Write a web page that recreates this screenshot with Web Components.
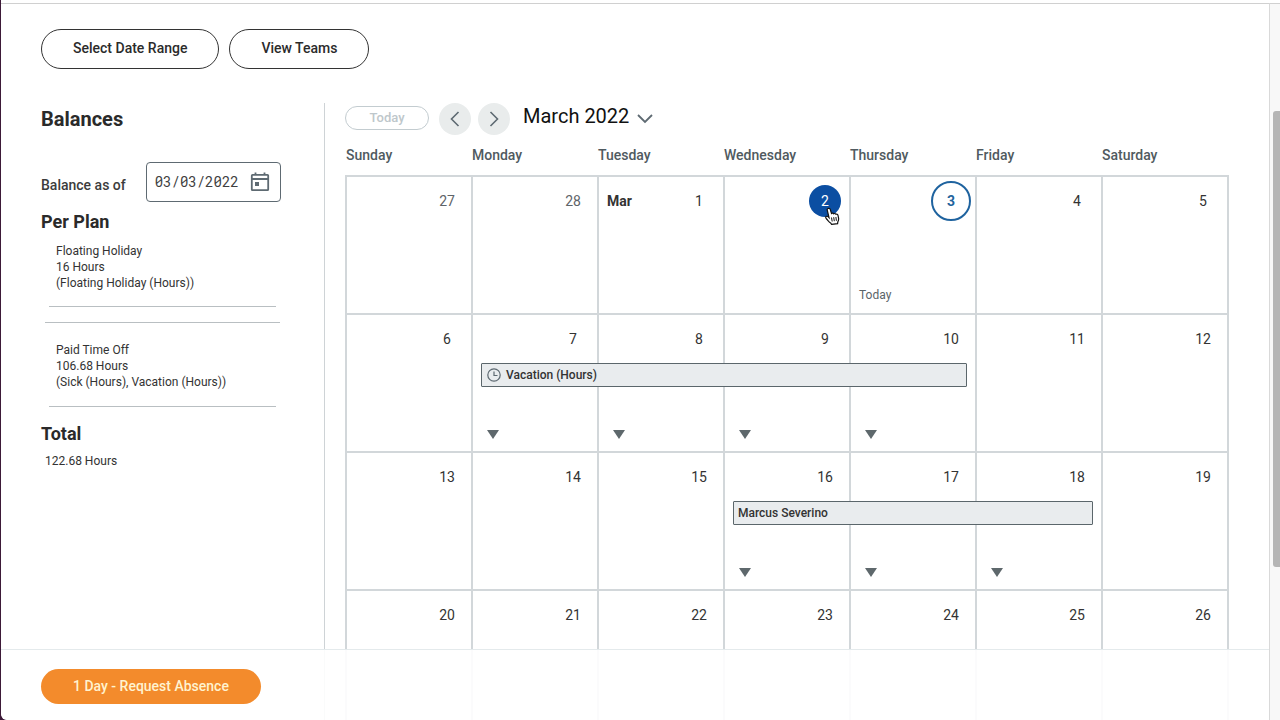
<!DOCTYPE html>
<html lang="en">
<head>
<meta charset="utf-8">
<title>Request Absence</title>
<style>
  html, body { height: 100%; }
  body {
    margin: 0;
    overflow: hidden;
    background: #3d1a38;
    color: #333;
    font-family: Roboto, "Liberation Sans", sans-serif;
    font-size: 14px;
    line-height: 16px;
  }
</style>
</head>
<body>
<absence-page>
  <pill-button slot="tools">Select Date Range</pill-button>
  <pill-button slot="tools">View Teams</pill-button>
  <balance-panel slot="side">
    <plan-balance>Floating Holiday<br>16 Hours<br>(Floating Holiday (Hours))</plan-balance>
    <plan-balance ruled>Paid Time Off<br>106.68 Hours<br>(Sick (Hours), Vacation (Hours))</plan-balance>
    <span slot="total">122.68 Hours</span>
  </balance-panel>
  <calendar-toolbar slot="main">March 2022</calendar-toolbar>
  <month-grid slot="main"></month-grid>
  <pill-button slot="footer" variant="primary">1 Day - Request Absence</pill-button>
</absence-page>

<script>
const define = (name, html, setup) => {
  const template = document.createElement('template');
  template.innerHTML = html;
  customElements.define(name, class extends HTMLElement {
    constructor() {
      super();
      this.attachShadow({ mode: 'open' }).append(template.content.cloneNode(true));
    }
    connectedCallback() {
      if (setup) setup(this, this.shadowRoot);
    }
  });
};

define('pill-button', `
  <style>
    :host { display: block; }
    button {
      display: block; height: 40px; padding: 0 31px 2px;
      border: 1px solid #333; border-radius: 20px; background: #fff; color: #2b2b2b;
      font: 500 14px/16px Roboto, "Liberation Sans", sans-serif; white-space: nowrap; cursor: pointer;
    }
    :host([variant="primary"]) button {
      height: 35px; padding: 0 32px 2px; border: 0; background: #f38b2c; color: #fff3d0;
    }
  </style>
  <button type="button"><slot></slot></button>`);

define('absence-page', `
  <style>
    :host {
      display: grid; grid-template-columns: minmax(0, 1fr) 10px;
      position: relative; height: 100vh; box-sizing: border-box; padding-top: 3px;
      margin-left: 1px; overflow: hidden; background: #fff; border-bottom-left-radius: 6px;
    }
    .page { border-top: 1px solid #d0d0d0; border-right: 1px solid #d9d9d9; padding: 25px 40px 0; min-height: 0; }
    .tools { display: flex; gap: 10px; }
    .columns { display: grid; grid-template-columns: 284px minmax(0, 1fr); margin-top: 34px; }
    aside { border-right: 1px solid #ced3d6; }
    main { padding-left: 20px; min-width: 0; }
    footer {
      position: absolute; left: 0; right: 11px; bottom: 0; height: 71px; box-sizing: border-box;
      border-top: 1px solid #e4eaec; background: rgba(255, 255, 255, .9); padding: 19px 40px 0;
      border-bottom-left-radius: 6px; display: flex; align-items: flex-start;
    }
  </style>
  <div class="page">
    <div class="tools"><slot name="tools"></slot></div>
    <div class="columns">
      <aside><slot name="side"></slot></aside>
      <main><slot name="main"></slot></main>
    </div>
  </div>
  <scroll-rail></scroll-rail>
  <footer><slot name="footer"></slot></footer>`);

define('scroll-rail', `
  <style>
    :host { display: grid; grid-template-rows: 107fr 456fr 153fr; background: #f8f8f8; border-top: 1px solid #d0d0d0; }
    i { grid-row: 2; margin-left: 3px; border-radius: 3px 0 0 3px; background: #b5b5b5; }
  </style>
  <i></i>`);

define('balance-panel', `
  <style>
    :host { display: block; padding-top: 4px; }
    h2 { margin: 0; font-size: 20px; line-height: 24px; font-weight: 700; color: #2a2a2a; }
    h3 { margin: 0; font-size: 18px; line-height: 24px; font-weight: 700; color: #2a2a2a; }
    date-field { margin: 31px 0 8px; }
    .total { padding: 7px 4px 0; font-size: 12px; }
    .totals { padding-top: 15px; }
  </style>
  <h2>Balances</h2>
  <date-field value="03/03/2022">Balance as of</date-field>
  <h3>Per Plan</h3>
  <slot></slot>
  <h3 class="totals">Total</h3>
  <div class="total"><slot name="total"></slot></div>`);

define('date-field', `
  <style>
    :host { display: flex; align-items: center; gap: 20px; }
    label { font-weight: 500; padding-top: 6px; color: #3c3c3c; }
    .box {
      display: flex; align-items: center; box-sizing: border-box; width: 135px; height: 40px;
      border: 1px solid #5e6a72; border-radius: 4px; padding: 0 8px; background: #fff;
    }
    input {
      width: 95px; padding: 0; border: 0; outline: 0; background: none; color: #3f3f3f;
      font: 14px/20px "Roboto Mono", "Liberation Mono", monospace;
    }
    button { display: block; padding: 0; border: 0; background: none; }
    svg { display: block; }
  </style>
  <label for="date"><slot></slot></label>
  <div class="box">
    <input id="date" type="text">
    <button type="button" aria-label="Open calendar">
      <svg width="20" height="22" viewBox="0 0 20 22" fill="none" stroke="#5e6a72" stroke-width="1.8">
        <path d="M2.500 3.800h15a.7.7 0 0 1 .7.7v14a.7.7 0 0 1-.7.7h-15a.7.7 0 0 1-.7-.7v-14a.7.7 0 0 1 .7-.7zM2 8h16M5.500 1.500v2.500M14.500 1.500v2.500"/><path d="M5 11h4v4H5z" fill="#5e6a72" stroke="none"/>
      </svg>
    </button>
  </div>`, (el, root) => {
  root.querySelector('input').value = el.getAttribute('value');
});

define('plan-balance', `
  <style>
    :host { display: block; font-size: 12px; line-height: 16px; }
    :host([ruled]) { margin: 15px 44px 0 4px; border-top: 1px solid #b9bfc2; padding-top: 19px; }
    p { margin: 0 48px 0 8px; padding: 9px 7px 15px; border-bottom: 1px solid #b9bfc2; }
    :host([ruled]) p { margin: 0 4px; padding: 0 7px 16px; }
  </style>
  <p><slot></slot></p>`);

define('calendar-toolbar', `
  <style>
    :host { display: flex; align-items: center; height: 32px; }
    button { display: grid; place-items: center; padding: 0; border: 0; }
    .today {
      width: 84px; height: 24px; border: 1px solid #c3ccd0; border-radius: 12px; background: #fff; color: #bec7cb;
      font: 500 13px/16px Roboto, "Liberation Sans", sans-serif; margin: 0 10px 2px 0;
    }
    .step { width: 32px; height: 32px; border-radius: 50%; background: #e9ecec; margin-right: 7px; }
    .month {
      display: flex; align-items: center; gap: 8px; margin: 0 0 6px 6px; background: none; color: #111;
      font: 400 20px/24px Roboto, "Liberation Sans", sans-serif;
    }
    .month svg { margin-top: 6px; }
    svg { display: block; fill: none; stroke: #5e6a72; }
  </style>
  <button class="today" type="button" disabled>Today</button>
  <button class="step" type="button" aria-label="Previous month"><svg width="10" height="16" stroke-width="1.600"><path d="M8.500 1 1.500 8l7 7"/></svg></button>
  <button class="step" type="button" aria-label="Next month"><svg width="10" height="16" stroke-width="1.600"><path d="m1.500 1 7 7-7 7"/></svg></button>
  <button class="month" type="button"><slot></slot><svg width="16" height="10" stroke-width="1.800"><path d="m1 1 7 7 7-7"/></svg></button>`);

define('day-cell', `
  <style>
    :host { display: block; position: relative; height: 136px; color: #333; }
    :host([outside]) { color: #5e6468; }
    .top { display: flex; justify-content: space-between; align-items: center; height: 32px; padding: 8px 8px 0; }
    b { font-weight: 700; }
    .num {
      display: grid; place-items: center; box-sizing: border-box; min-width: 32px; height: 32px;
      margin-left: auto; border-radius: 50%;
    }
    :host([selected]) .num { background: #0b4ea2; color: #fff; }
    :host([today]) .num { width: 40px; height: 40px; margin-right: -4px; border: 2px solid #1f639f; color: #22639c; font-weight: 700; }
    .note { position: absolute; left: 8px; bottom: 10px; font-size: 12px; color: #5a6468; }
    .more { position: absolute; left: 14px; bottom: 12px; padding: 0; border: 0; background: none; }
    svg { display: block; }
    [hidden] { display: none; }
  </style>
  <div class="top"><b></b><span class="num"></span></div>
  <span class="note" hidden>Today</span>
  <button class="more" type="button" aria-label="More" hidden><svg width="12" height="9"><path d="M0 0h12L6 9z" fill="#5e686c"/></svg></button>
  <slot></slot>`, (el, root) => {
  root.querySelector('.num').textContent = el.getAttribute('day');
  root.querySelector('b').textContent = el.getAttribute('month') || '';
  root.querySelector('.note').hidden = !el.hasAttribute('today');
  root.querySelector('.more').hidden = !el.hasAttribute('more');
});

define('event-bar', `
  <style>
    :host {
      position: absolute; z-index: 1; left: 8px; top: 48px; box-sizing: border-box; height: 24px;
      width: calc(var(--days) * (100% + 2px) - 18px); display: flex; align-items: center; gap: 5px;
      padding: 0 4px; border: 1px solid #5b666b; border-radius: 1px; background: #e9ecee; color: #333;
      font-size: 12px; font-weight: 500; white-space: nowrap;
    }
    svg { display: none; margin-left: 1px; }
    :host([timed]) svg { display: block; }
  </style>
  <svg width="14" height="14" fill="none" stroke="#5e6a72" stroke-width="1.200"><circle cx="7" cy="7" r="6.200"/><path d="M7 3.500v4h3.500"/></svg>
  <slot></slot>`);

define('hand-cursor', `
  <style>
    :host { position: absolute; z-index: 2; left: 99px; top: 30px; pointer-events: none; }
    svg { display: block; }
  </style>
  <svg width="16" height="18" viewBox="0 0 16 18">
    <path d="M4 1.500c1-.5 2 0 2.300 1L7.500 6.500c.8-.7 1.800-.5 2.200.3.8-.6 1.800-.3 2.200.5.9-.4 1.800 0 2.100 1l.6 3c.2 1.500-.3 2.700-.8 3.700l-.2 1.600-6 .8-1-1.400c-1.500-.8-2.600-2.500-4-4-.9-1-1.200-2-.5-2.500.8-.6 1.900 0 2.900 1L3.200 3c-.2-.7.2-1.200.8-1.500z" fill="#fff" stroke="#111" stroke-width="1.200"/>
    <path d="m7.500 10.500.7 4M9.700 10.200l.6 4M11.900 10l.5 3.800" fill="none" stroke="#111"/>
  </svg>`);

define('month-grid', `
  <style>
    :host { display: block; padding-top: 12px; }
    table { width: 100%; border-collapse: collapse; table-layout: fixed; }
    th { height: 16px; padding: 0 0 12px; text-align: left; font-weight: 500; color: #505a60; }
    td { padding: 0; border: 2px solid #d2d7da; }
  </style>
  <table>
    <thead><tr></tr></thead>
    <tbody></tbody>
  </table>`, (el, root) => {
  root.querySelector('thead tr').innerHTML =
    ['Sunday', 'Monday', 'Tuesday', 'Wednesday', 'Thursday', 'Friday', 'Saturday']
      .map(name => `<th scope="col">${name}</th>`).join('');
  const days = [27, 28, ...Array.from({ length: 26 }, (_, i) => i + 1)];
  const flags = { 1: 'month="Mar"', 2: 'selected', 3: 'today' };
  const inside = {
    2: '<hand-cursor></hand-cursor>',
    7: '<event-bar timed style="--days: 4">Vacation (Hours)</event-bar>',
    16: '<event-bar style="--days: 3">Marcus Severino</event-bar>'
  };
  const more = [7, 8, 9, 10, 16, 17, 18];
  const cells = days.map((day, i) => i < 2
    ? `<td><day-cell day="${day}" outside></day-cell></td>`
    : `<td><day-cell day="${day}" ${flags[day] || ''} ${more.includes(day) ? 'more' : ''}>${inside[day] || ''}</day-cell></td>`);
  root.querySelector('tbody').innerHTML =
    [0, 7, 14, 21].map(start => `<tr>${cells.slice(start, start + 7).join('')}</tr>`).join('');
});
</script>
</body>
</html>
